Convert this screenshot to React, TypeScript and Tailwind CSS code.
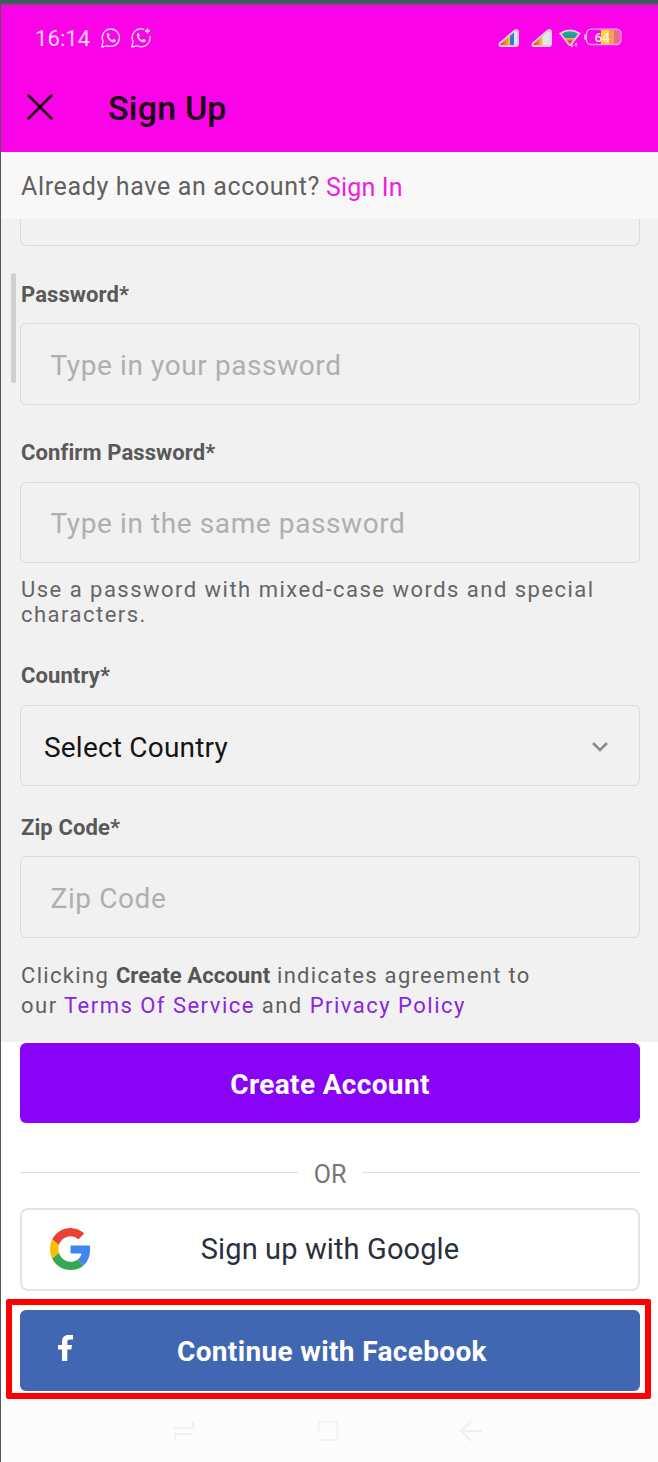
import type { ReactNode } from 'react';

const labelClass = 'block pl-px text-[22px] leading-[26px] font-bold tracking-[0.1px] text-[#595959]';
const fieldClass = 'flex w-full items-center rounded-md border border-[#dadada] bg-[#f1f1f1]';

function WhatsAppIcon({ badge = false }: { badge?: boolean }) {
  return (
    <svg viewBox="0 0 20 20" className="h-5 w-5" fill="none" stroke="#ffd6fb" strokeWidth="1.3">
      <path d={badge ? 'M13.2 1.6A8.6 8.6 0 0 0 2.1 13.4L.9 18.9l5.7-1.1A8.7 8.7 0 0 0 18.8 8' : 'M10.2 1a8.7 8.7 0 0 0-8.1 12.4L.9 18.9l5.7-1.1A8.7 8.7 0 1 0 10.2 1Z'} />
      <path
        d="M6.2 5.5c.6-.7 1.4-.5 1.7.1l.7 1.6c.2.5-.6 1-.8 1.5.6 1.5 1.9 2.7 3.5 3.3.6-.3 1-1.2 1.5-1l1.7.8c.6.4.2 1.5-.5 2-3.1 2.4-9.6-3.6-7.8-8.3Z"
        fill="#ffd6fb"
        stroke="none"
      />
      {badge && <path d="M16.5.6v5M14 3.1h5" strokeWidth="1.8" />}
    </svg>
  );
}

function SignalIcon({ id, blue = false }: { id: string; blue?: boolean }) {
  return (
    <svg viewBox="0 0 22 19" className="h-[19px] w-[22px]">
      <defs>
        <linearGradient id={id}>
          <stop offset="0.1" stopColor="#d9472f" />
          <stop offset="0.4" stopColor="#f0a026" />
          <stop offset="0.58" stopColor={blue ? '#f3cf38' : '#f5dfa5'} />
          <stop offset="0.59" stopColor={blue ? '#2a80d0' : '#dceeea'} />
          <stop offset="0.76" stopColor={blue ? '#2a80d0' : '#dceeea'} />
          <stop offset="0.77" stopColor="#d5e9e5" />
        </linearGradient>
      </defs>
      <path
        d="M2 14.2 16.5 1.8q3.5-2.2 3.5 1.5v11.7q0 2-2 2H3q-2.5 0-1-2.8Z"
        fill={`url(#${id})`}
        stroke="#eac5df"
        strokeWidth="2"
      />
    </svg>
  );
}

function WifiIcon() {
  return (
    <svg viewBox="0 0 22 20" className="h-5 w-[22px]">
      <defs>
        <linearGradient id="wifi" x2="0" y2="1">
          <stop offset="0.2" stopColor="#26ae6c" />
          <stop offset="0.35" stopColor="#2591bd" />
          <stop offset="0.52" stopColor="#258fc4" />
          <stop offset="0.53" stopColor="#f3c832" />
          <stop offset="0.75" stopColor="#e4522c" />
        </linearGradient>
      </defs>
      <path d="M1.3 4.5Q11-1.8 20.5 4.5L11.8 15.6q-.9 1-1.8 0Z" fill="url(#wifi)" stroke="#eac5df" strokeWidth="1.8" />
      <path d="M13 14v4m-1.5-1.5L13 18l1-1.5M17 18v-4m-1.3 1.5L17 14l1.3 1.5" fill="none" stroke="#ffd6fb" />
    </svg>
  );
}

function BatteryIcon() {
  return (
    <svg viewBox="0 0 38 18" className="h-[18px] w-[38px]">
      <rect x="17" y="2" width="8" height="14" fill="#f8d928" />
      <rect x="25" y="2" width="5" height="14" fill="#f4a05e" />
      <path d="M30 2h3q3 0 3 3v8q0 3-3 3h-3Z" fill="#ed6b88" />
      <rect x="2.5" y="1.2" width="34.5" height="15.3" rx="4.5" fill="none" stroke="#f8a9e9" strokeWidth="1.3" />
      <path d="M1.2 6.5v5" stroke="#ffe0fc" strokeWidth="2" />
      <text x="10.5" y="14" fontSize="13.5" fontWeight="500" fill="#ffe9e8">
        64
      </text>
    </svg>
  );
}

function GoogleLogo() {
  return (
    <svg viewBox="0 0 48 48" className="h-[42px] w-[41px]" preserveAspectRatio="none">
      <path fill="#EA4335" d="M24 9.5c3.54 0 6.71 1.22 9.21 3.6l6.85-6.85C35.9 2.38 30.47 0 24 0 14.62 0 6.51 5.38 2.56 13.22l7.98 6.19C12.43 13.72 17.74 9.5 24 9.5z" />
      <path fill="#4285F4" d="M46.98 24.55c0-1.57-.15-3.09-.38-4.55H24v9.02h12.94c-.58 2.96-2.26 5.48-4.78 7.18l7.73 6c4.51-4.18 7.09-10.36 7.09-17.65z" />
      <path fill="#FBBC05" d="M10.53 28.59c-.48-1.45-.76-2.99-.76-4.59s.27-3.14.76-4.59l-7.98-6.19C.92 16.46 0 20.12 0 24c0 3.88.92 7.54 2.56 10.78l7.97-6.19z" />
      <path fill="#34A853" d="M24 48c6.48 0 11.93-2.13 15.89-5.81l-7.73-6c-2.15 1.45-4.92 2.3-8.16 2.3-6.26 0-11.57-4.22-13.47-9.91l-7.98 6.19C6.51 42.62 14.62 48 24 48z" />
    </svg>
  );
}

function Placeholder({ children }: { children: ReactNode }) {
  return <span className="mt-[3px] ml-[29.5px] text-[28px] tracking-[0.6px] text-[#afafaf]">{children}</span>;
}

export default function App() {
  return (
    <div className="h-[1462px] w-[658px] overflow-hidden border-l-[1.5px] border-[#555] bg-white font-['Roboto',sans-serif]">
      <div className="h-[3px] bg-[#3e5a60]" />
      <div className="h-0.5 bg-[#5b5d5c]" />

      <header className="h-[147px] bg-[#fa04e7]">
        <div className="flex h-[66px] items-center pr-[36px] pl-[34px]">
          <span className="w-[55px] text-[22px] tracking-[0.1px] text-[#ffd6fb]">16:14</span>
          <div className="ml-[11px] flex gap-[10px]">
            <WhatsAppIcon />
            <WhatsAppIcon badge />
          </div>
          <div className="ml-auto flex items-center">
            <SignalIcon id="sim1" blue />
            <div className="ml-[11px]">
              <SignalIcon id="sim2" />
            </div>
            <div className="mt-0.5 ml-[6px]">
              <WifiIcon />
            </div>
            <div className="-mt-0.5 ml-[3px]">
              <BatteryIcon />
            </div>
          </div>
        </div>
        <div className="flex h-[74px] items-center pl-[26px]">
          <svg viewBox="0 0 26 26" className="mb-[3px] h-[26px] w-[26px]" stroke="#160014" strokeWidth="2.5" strokeLinecap="round">
            <path d="m1.5 1.5 23 23m0-23-23 23" />
          </svg>
          <h1 className="ml-[55px] text-[34px] font-medium tracking-[0.2px] text-[#160014]">Sign Up</h1>
        </div>
      </header>

      <div className="flex h-[67px] items-center bg-[#f8f8f8] pt-[3px] pl-5 text-[25px] text-[#606060]">
        <span className="tracking-[0.65px]">Already have an account?</span>
        <a className="mt-px ml-[6px] tracking-[0.15px] text-[#ea24dc]">Sign In</a>
      </div>

      <main className="relative h-[823px] bg-[#f1f1f1] pr-[18px] pl-[19px]">
        <div className="absolute top-[54px] left-[10px] h-[110px] w-[5px] rounded-full bg-[#cfcfcf]" />
        <div className="h-[27px] rounded-b-md border border-t-0 border-[#dadada]" />

        <label className={`${labelClass} mt-[36px]`}>Password*</label>
        <div className={`${fieldClass} mt-[15px] h-[82px]`}>
          <Placeholder>Type in your password</Placeholder>
        </div>

        <label className={`${labelClass} mt-[35px]`}>Confirm Password*</label>
        <div className={`${fieldClass} mt-[16px] h-[81px]`}>
          <Placeholder>Type in the same password</Placeholder>
        </div>
        <p className="mt-[14px] pl-px text-[22px] leading-[25px] tracking-[1.48px] text-[#666]">
          Use a password with mixed-case words and special
          <br />
          characters.
        </p>

        <label className={`${labelClass} mt-[36px]`}>Country*</label>
        <div className={`${fieldClass} mt-[16px] h-[81px] justify-between border-[#cecece]`}>
          <span className="mt-[4px] ml-[23px] text-[28px] tracking-[0.2px] text-[#151515]">Select Country</span>
          <svg viewBox="0 0 18 12" className="mt-[2px] mr-[30px] h-3 w-[18px]" fill="none" stroke="#8b8b8b" strokeWidth="2.6">
            <path d="m2 2 7 7 7-7" />
          </svg>
        </div>

        <label className={`${labelClass} mt-[29px]`}>Zip Code*</label>
        <div className={`${fieldClass} mt-[15px] h-[82px]`}>
          <Placeholder>Zip Code</Placeholder>
        </div>

        <p className="mt-[23px] pl-px text-[22px] leading-[29.5px] tracking-[1.48px] text-[#606060]">
          <span className="tracking-[1.32px]">
            Clicking <b className="tracking-[0.1px] text-[#555]">Create Account</b> indicates agreement to
          </span>
          <br />
          our <a className="text-[#8726dc]">Terms Of Service</a> and <a className="text-[#8726dc]">Privacy Policy</a>
        </p>
      </main>

      <section className="h-[349px] pt-px pr-[18px] pl-[19px]">
        <button className="block h-20 w-full rounded-md bg-[#8903f8] pt-1 text-[28px] font-bold tracking-[0.35px] text-white">
          Create Account
        </button>

        <div className="flex h-[85px] items-center pt-[14px]">
          <div className="h-px flex-1 bg-[#dedede]" />
          <span className="mx-[16px] mt-[4px] text-[25px] text-[#777]">OR</span>
          <div className="h-px flex-1 bg-[#dedede]" />
        </div>

        <button className="relative block h-[83px] w-full rounded-lg border-2 border-[#e3e3e8] bg-white text-[29px] tracking-[0.12px] text-[#29303c]">
          <div className="absolute top-[18px] left-[28px]">
            <GoogleLogo />
          </div>
          <span>Sign up with Google</span>
        </button>

        <div className="relative mt-[19px]">
          <button className="flex h-[81px] w-full items-center rounded-md bg-[#4267b2] text-[28px] font-bold tracking-[0.35px] text-white">
            <svg viewBox="0 0 15 26" className="mb-[5px] ml-[38px] h-[26px] w-[15px]" fill="white">
              <path d="M4 26V14.5H0V10h4V7C4 2.5 6.2 0 10.5 0H15v4.5h-2.8C10 4.5 9.3 5.3 9.3 7v3H14l-.7 4.5h-4V26Z" />
            </svg>
            <span className="mt-[3px] ml-[104px]">Continue with Facebook</span>
          </button>
          <div className="pointer-events-none absolute -top-[11px] -right-[11px] -bottom-[8px] -left-[14px] rounded-[2px] border-[6px] border-[#f00]" />
        </div>
      </section>

      <nav className="h-[71px] bg-[#fcfcfc]">
        <div className="flex h-[79px] items-center pl-[172px]">
          <svg viewBox="0 0 22 22" className="h-[22px] w-[22px]" fill="none" stroke="#f0f0f0" strokeWidth="1.8">
            <path d="M1 8h19V2M20 14H2v6" />
          </svg>
          <svg viewBox="0 0 22 22" className="ml-[122px] h-[22px] w-[22px]" fill="none" stroke="#f3f3f3" strokeWidth="1.8">
            <path d="M2 13V2h18v18H2" />
          </svg>
          <svg viewBox="0 0 24 24" className="ml-[120px] h-6 w-6" fill="none" stroke="#f0f0f0" strokeWidth="1.8">
            <path d="M23 12H2L12 2M2 12l10 10" />
          </svg>
        </div>
      </nav>
    </div>
  );
}
